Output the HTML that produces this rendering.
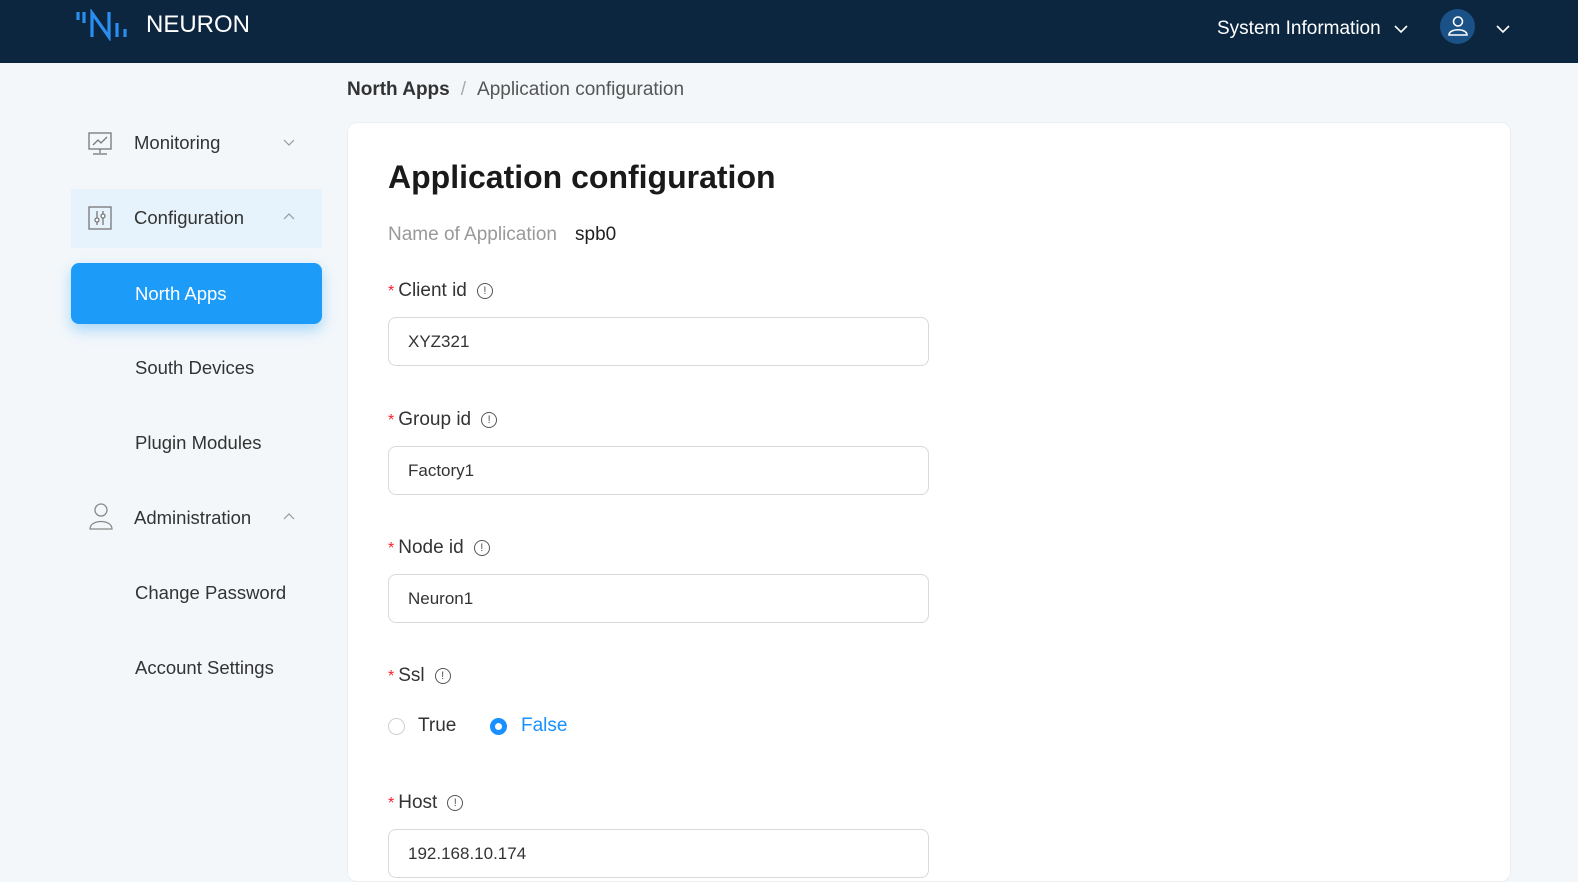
<!DOCTYPE html>
<html><head><meta charset="utf-8"><style>
*{box-sizing:border-box;margin:0;padding:0}
body{width:1578px;height:874px;overflow:hidden;background:#f3f7fa;font-family:"Liberation Sans","Noto Sans CJK SC",sans-serif;position:relative}
.hdr{position:absolute;left:0;top:0;width:1578px;height:63px;background:#0c263f}
.abs{position:absolute;white-space:nowrap}
.side{color:#333;font-size:18.5px}
.card{position:absolute;left:347px;top:122px;width:1164px;height:760px;background:#fff;border-radius:10px;border:1px solid #eceff2}
.lbl{font-size:19px;color:#333}
.lbl .r{color:#f5222d;font-size:16px;margin-right:4px}
.info{display:inline-block;width:16px;height:16px;border:1.3px solid #555;border-radius:50%;font-size:11px;text-align:center;line-height:14px;color:#555;margin-left:10px;vertical-align:2px}
.inp{position:absolute;left:388px;width:541px;height:49px;border:1px solid #d9d9d9;border-radius:8px;font-size:17px;color:#333;padding:14px 0 0 19px}
</style></head><body>
<div class="hdr">
<svg class="abs" style="left:75px;top:9px" width="58" height="32" viewBox="0 0 58 32">
<g stroke="#2a8ef0" stroke-width="3.2" fill="none" stroke-linecap="butt">
<line x1="3" y1="3" x2="3" y2="11"/><line x1="9" y1="3" x2="9" y2="14"/>
<path d="M17 28 V4 L34 28 V3"/>
<line x1="42" y1="14" x2="42" y2="28"/><line x1="50" y1="20" x2="50" y2="28"/></g></svg>
<div class="abs" style="left:146px;top:11px;color:#fff;font-size:24px">NEURON</div>
<div class="abs" style="left:1217px;top:18px;color:#fff;font-size:19px">System Information</div>
<svg class="abs" style="left:1394px;top:24px" width="14" height="10"><path d="M1 2 L7 8 L13 2" stroke="#fff" stroke-width="1.6" fill="none"/></svg>
<div class="abs" style="left:1440px;top:9px;width:35px;height:35px;border-radius:50%;background:#1a5187"></div>
<svg class="abs" style="left:1446px;top:14px" width="24" height="24" viewBox="0 0 24 24"><g stroke="#fff" stroke-width="1.6" fill="none"><circle cx="12" cy="7.5" r="4.5"/><path d="M3 21 C3 14 21 14 21 21 Z"/></g></svg>
<svg class="abs" style="left:1496px;top:24px" width="14" height="10"><path d="M1 2 L7 8 L13 2" stroke="#fff" stroke-width="1.6" fill="none"/></svg>
</div>

<svg class="abs" style="left:87px;top:131px" width="26" height="26" viewBox="0 0 26 26"><g stroke="#777" stroke-width="1.3" fill="none"><rect x="2" y="2" width="22" height="16"/><path d="M6 14 L11 9 L14 12 L20 6"/><line x1="13" y1="18" x2="13" y2="22"/><line x1="6" y1="23" x2="20" y2="23"/></g></svg>
<div class="abs side" style="left:134px;top:132px">Monitoring</div>
<svg class="abs" style="left:283px;top:139px" width="12" height="8"><path d="M1 1 L6 6 L11 1" stroke="#999" stroke-width="1.2" fill="none"/></svg>

<div class="abs" style="left:71px;top:189px;width:251px;height:59px;background:#e6f3fd"></div>
<svg class="abs" style="left:88px;top:206px" width="24" height="24" viewBox="0 0 24 24"><g stroke="#777" stroke-width="1.3" fill="none"><rect x="1" y="1" width="22" height="22"/><line x1="9" y1="5" x2="9" y2="19"/><line x1="15" y1="5" x2="15" y2="19"/><circle cx="9" cy="14" r="2" fill="#fff"/><circle cx="15" cy="10" r="2" fill="#fff"/></g></svg>
<div class="abs side" style="left:134px;top:207px">Configuration</div>
<svg class="abs" style="left:283px;top:212px" width="12" height="8"><path d="M1 7 L6 2 L11 7" stroke="#999" stroke-width="1.2" fill="none"/></svg>

<div class="abs" style="left:71px;top:263px;width:251px;height:61px;background:#1d9bf8;border-radius:8px;box-shadow:0 6px 14px rgba(29,155,248,.35)"></div>
<div class="abs side" style="left:135px;top:283px;color:#fff">North Apps</div>
<div class="abs side" style="left:135px;top:357px">South Devices</div>
<div class="abs side" style="left:135px;top:432px">Plugin Modules</div>
<svg class="abs" style="left:88px;top:502px" width="26" height="28" viewBox="0 0 26 28"><g stroke="#888" stroke-width="1.3" fill="none"><circle cx="13" cy="8" r="6"/><path d="M2 27 C2 17 24 17 24 27 Z"/></g></svg>
<div class="abs side" style="left:134px;top:507px">Administration</div>
<svg class="abs" style="left:283px;top:512px" width="12" height="8"><path d="M1 7 L6 2 L11 7" stroke="#999" stroke-width="1.2" fill="none"/></svg>
<div class="abs side" style="left:135px;top:582px">Change Password</div>
<div class="abs side" style="left:135px;top:657px">Account Settings</div>

<div class="abs" style="left:347px;top:79px;font-size:19px;color:#333"><b>North Apps</b><span style="color:#aaa;margin:0 11px">/</span><span style="color:#555">Application configuration</span></div>

<div class="card"></div>
<div class="abs" style="left:388px;top:159px;font-size:32px;font-weight:bold;color:#1a1a1a">Application configuration</div>
<div class="abs" style="left:388px;top:224px;font-size:19px;color:#999">Name of Application<span style="color:#222;margin-left:18px">spb0</span></div>

<div class="abs lbl" style="left:388px;top:280px"><span class="r">*</span>Client id<span class="info">!</span></div>
<div class="inp" style="top:317px">XYZ321</div>
<div class="abs lbl" style="left:388px;top:409px"><span class="r">*</span>Group id<span class="info">!</span></div>
<div class="inp" style="top:446px">Factory1</div>
<div class="abs lbl" style="left:388px;top:537px"><span class="r">*</span>Node id<span class="info">!</span></div>
<div class="inp" style="top:574px">Neuron1</div>
<div class="abs lbl" style="left:388px;top:665px"><span class="r">*</span>Ssl<span class="info">!</span></div>
<div class="abs" style="left:388px;top:718px;width:17px;height:17px;border:1px solid #d0d0d0;border-radius:50%"></div>
<div class="abs lbl" style="left:418px;top:715px">True</div>
<div class="abs" style="left:490px;top:718px;width:17px;height:17px;border:1px solid #1890ff;border-radius:50%;background:#1890ff"><div style="width:7px;height:7px;background:#fff;border-radius:50%;margin:4px"></div></div>
<div class="abs lbl" style="left:521px;top:715px;color:#1890ff">False</div>
<div class="abs lbl" style="left:388px;top:792px"><span class="r">*</span>Host<span class="info">!</span></div>
<div class="inp" style="top:829px">192.168.10.174</div>
</body></html>
